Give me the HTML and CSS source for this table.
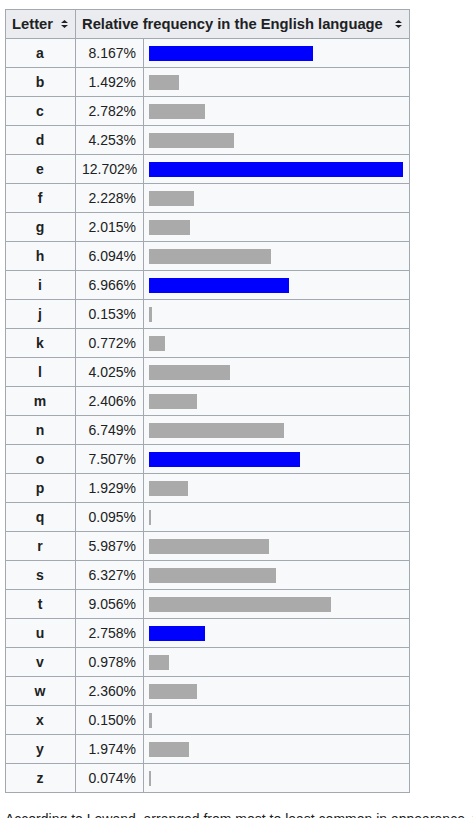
FILE: index.html
```html
<!DOCTYPE html>
<html lang="en">
<head>
<meta charset="utf-8">
<title>Letter frequency</title>
<link rel="stylesheet" href="styles.css">
</head>
<body>
<div class="page">
<table class="wikitable">
<colgroup><col class="c-letter"><col class="c-pct"><col class="c-bar"></colgroup>
<thead>
<tr>
<th><span class="th-in"><span>Letter</span><svg class="sort" width="7" height="8" viewBox="0 0 7 8"><path d="M3.5 0 L7 3 L0 3 Z M0 5 L7 5 L3.5 8 Z" fill="#202122"/></svg></span></th>
<th colspan="2"><span class="th-in"><span>Relative frequency in the English language</span><svg class="sort" width="7" height="8" viewBox="0 0 7 8"><path d="M3.5 0 L7 3 L0 3 Z M0 5 L7 5 L3.5 8 Z" fill="#202122"/></svg></span></th>
</tr>
</thead>
<tbody>
<tr><td class="ltr">a</td><td class="pct">8.167%</td><td class="barcell"><div class="bar vowel" style="width:164px"></div></td></tr>
<tr><td class="ltr">b</td><td class="pct">1.492%</td><td class="barcell"><div class="bar" style="width:30px"></div></td></tr>
<tr><td class="ltr">c</td><td class="pct">2.782%</td><td class="barcell"><div class="bar" style="width:56px"></div></td></tr>
<tr><td class="ltr">d</td><td class="pct">4.253%</td><td class="barcell"><div class="bar" style="width:85px"></div></td></tr>
<tr><td class="ltr">e</td><td class="pct">12.702%</td><td class="barcell"><div class="bar vowel" style="width:254px"></div></td></tr>
<tr><td class="ltr">f</td><td class="pct">2.228%</td><td class="barcell"><div class="bar" style="width:45px"></div></td></tr>
<tr><td class="ltr">g</td><td class="pct">2.015%</td><td class="barcell"><div class="bar" style="width:41px"></div></td></tr>
<tr><td class="ltr">h</td><td class="pct">6.094%</td><td class="barcell"><div class="bar" style="width:122px"></div></td></tr>
<tr><td class="ltr">i</td><td class="pct">6.966%</td><td class="barcell"><div class="bar vowel" style="width:140px"></div></td></tr>
<tr><td class="ltr">j</td><td class="pct">0.153%</td><td class="barcell"><div class="bar" style="width:3px"></div></td></tr>
<tr><td class="ltr">k</td><td class="pct">0.772%</td><td class="barcell"><div class="bar" style="width:16px"></div></td></tr>
<tr><td class="ltr">l</td><td class="pct">4.025%</td><td class="barcell"><div class="bar" style="width:81px"></div></td></tr>
<tr><td class="ltr">m</td><td class="pct">2.406%</td><td class="barcell"><div class="bar" style="width:48px"></div></td></tr>
<tr><td class="ltr">n</td><td class="pct">6.749%</td><td class="barcell"><div class="bar" style="width:135px"></div></td></tr>
<tr><td class="ltr">o</td><td class="pct">7.507%</td><td class="barcell"><div class="bar vowel" style="width:151px"></div></td></tr>
<tr><td class="ltr">p</td><td class="pct">1.929%</td><td class="barcell"><div class="bar" style="width:39px"></div></td></tr>
<tr><td class="ltr">q</td><td class="pct">0.095%</td><td class="barcell"><div class="bar" style="width:2px"></div></td></tr>
<tr><td class="ltr">r</td><td class="pct">5.987%</td><td class="barcell"><div class="bar" style="width:120px"></div></td></tr>
<tr><td class="ltr">s</td><td class="pct">6.327%</td><td class="barcell"><div class="bar" style="width:127px"></div></td></tr>
<tr><td class="ltr">t</td><td class="pct">9.056%</td><td class="barcell"><div class="bar" style="width:182px"></div></td></tr>
<tr><td class="ltr">u</td><td class="pct">2.758%</td><td class="barcell"><div class="bar vowel" style="width:56px"></div></td></tr>
<tr><td class="ltr">v</td><td class="pct">0.978%</td><td class="barcell"><div class="bar" style="width:20px"></div></td></tr>
<tr><td class="ltr">w</td><td class="pct">2.360%</td><td class="barcell"><div class="bar" style="width:48px"></div></td></tr>
<tr><td class="ltr">x</td><td class="pct">0.150%</td><td class="barcell"><div class="bar" style="width:3px"></div></td></tr>
<tr><td class="ltr">y</td><td class="pct">1.974%</td><td class="barcell"><div class="bar" style="width:40px"></div></td></tr>
<tr><td class="ltr">z</td><td class="pct">0.074%</td><td class="barcell"><div class="bar" style="width:2px"></div></td></tr>
</tbody>
</table>
<p class="note">According to <a class="ref">Lewand</a>, arranged from most to least common in appearance, the letters are: etaoinshrdlcumwfgypbvkjxqz</p>
</div>
</body>
</html>
```
FILE: styles.css
```css
html, body {
  margin: 0;
  padding: 0;
  background: #ffffff;
}
body {
  font-family: "Liberation Sans", Arial, sans-serif;
  font-size: 14px;
  color: #202122;
}
.page {
  padding: 9px 5px 0 5px;
}
.wikitable {
  border-collapse: collapse;
  table-layout: fixed;
  width: 405px;
  background: #f8f9fa;
  color: #202122;
  border: 1px solid #a2a9b1;
}
.c-letter { width: 70px; }
.c-pct { width: 68px; }
.c-bar { width: 266px; }
.wikitable th,
.wikitable td {
  border: 1px solid #a2a9b1;
  padding: 3px 7px 3px 6px;
  line-height: 22px;
  height: 22px;
}
.wikitable th {
  background: #eaecf0;
  font-weight: bold;
  font-size: 14.75px;
  text-align: left;
  white-space: nowrap;
  padding-right: 7px;
}
.th-in {
  display: flex;
  align-items: center;
  justify-content: space-between;
}
.sort {
  display: block;
  flex: none;
}
.ltr {
  text-align: center;
  font-weight: bold;
}
.pct {
  text-align: right;
}
.wikitable td.barcell {
  padding-left: 5px;
}
.bar {
  height: 15px;
  margin: 4px 0 3px 0;
  background: #aaaaaa;
}
.bar.vowel {
  background: #0000ff;
}
.note {
  margin: 15px 0 0 0;
  line-height: 22px;
  white-space: nowrap;
}
.ref {
  color: #202122;
  text-decoration: none;
}
```
